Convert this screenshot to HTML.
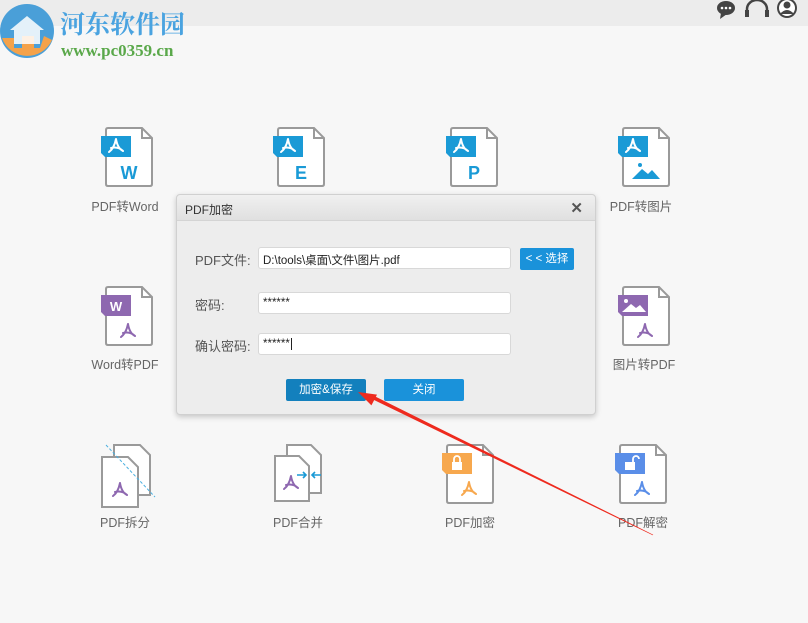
<!DOCTYPE html>
<html><head><meta charset="utf-8"><style>
*{margin:0;padding:0;box-sizing:border-box}
body{width:808px;height:623px;background:#f7f7f7;position:relative;overflow:hidden;font-family:"Liberation Sans","Noto Sans CJK SC",sans-serif}
.top{position:absolute;left:0;top:0;width:808px;height:26px;background:#ececec}
.lbl{position:absolute;font-size:12.5px;color:#666;text-align:center;width:120px}
.dlg{position:absolute;left:176px;top:194px;width:420px;height:221px;background:#ededed;border:1px solid #d0d0d0;border-radius:4px;box-shadow:0 2px 6px rgba(0,0,0,.2)}
.tb{height:26px;background:linear-gradient(#f0f0f0,#e0e0e0);border-bottom:1px solid #d4d4d4;border-radius:4px 4px 0 0;font-size:12px;color:#333;padding:6px 0 0 8px}
.x{position:absolute;right:12px;top:4px;font-size:15px;font-weight:bold;color:#555}
.fl{position:absolute;font-size:13px;color:#555}
.in{position:absolute;left:81px;width:253px;height:22px;background:#fff;border:1px solid #d8d8d8;border-radius:3px;font-size:11.5px;color:#222;padding:4px 0 0 4px}
.btn{position:absolute;height:22px;color:#fff;font-size:11.5px;text-align:center;line-height:22px;border-radius:2px}
</style></head><body>
<div class="top"></div>
<svg width="808" height="623" style="position:absolute;left:0;top:0">
<defs>
<g id="doc"><path d="M2 0H36L46 10V56Q46 58 44 58H2Q0 58 0 56V2Q0 0 2 0Z" fill="#fff" stroke="#9a9a9a" stroke-width="2"/><path d="M36 0V10H46" fill="none" stroke="#9a9a9a" stroke-width="2"/></g>
<path id="acro" d="M0 -7C-1 -2 -3 3 -7 6M0 -7C1 -1 3 3 7 5M-5 2C-1 1 3 1 7 5" fill="none" stroke-width="2" stroke-linecap="round"/>
</defs>
<circle cx="27" cy="31" r="27" fill="#4a9fd8"/>
<path d="M2 38 A27 27 0 0 0 52 40 L44 36 L40 48 L34 48 L34 36 L22 36 L22 48 L14 48 L14 38Z" fill="#f4a24a"/>
<path d="M10 30 L27 16 L44 30 L40 30 L40 44 L14 44 L14 30Z" fill="#fff" opacity=".85"/>
<text x="60" y="33" font-family="Liberation Serif,'Noto Serif CJK SC',serif" font-weight="bold" font-size="25" fill="#4aa3e0">河东软件园</text>
<text x="61" y="56" font-family="Liberation Serif,serif" font-weight="bold" font-size="17" fill="#5aa84a">www.pc0359.cn</text>
<ellipse cx="726" cy="8" rx="9" ry="7" fill="#444"/><path d="M721 13 L720 19 L727 14Z" fill="#444"/>
<circle cx="722" cy="8" r="1.3" fill="#fff"/><circle cx="726" cy="8" r="1.3" fill="#fff"/><circle cx="730" cy="8" r="1.3" fill="#fff"/>
<path d="M747 15 V9 A10 9 0 0 1 767 9 V15" fill="none" stroke="#444" stroke-width="2.5"/>
<rect x="745" y="10" width="4" height="7" fill="#444"/><rect x="765" y="10" width="4" height="7" fill="#444"/>
<circle cx="787" cy="8" r="10" fill="#444"/><circle cx="787" cy="8" r="8" fill="#fff"/><circle cx="787" cy="5" r="3.5" fill="#444"/><path d="M780 14 Q787 6 794 14 Z" fill="#444"/>
<g transform="translate(106,128)"><use href="#doc"/><path d="M-5 8H25V29H-1L-5 25Z" fill="#1a9ad6"/><use href="#acro" transform="translate(10,18)" stroke="#fff"/><text x="23" y="51" text-anchor="middle" font-size="18" font-weight="bold" fill="#1a9ad6">W</text></g>
<g transform="translate(278,128)"><use href="#doc"/><path d="M-5 8H25V29H-1L-5 25Z" fill="#1a9ad6"/><use href="#acro" transform="translate(10,18)" stroke="#fff"/><text x="23" y="51" text-anchor="middle" font-size="18" font-weight="bold" fill="#1a9ad6">E</text></g>
<g transform="translate(451,128)"><use href="#doc"/><path d="M-5 8H25V29H-1L-5 25Z" fill="#1a9ad6"/><use href="#acro" transform="translate(10,18)" stroke="#fff"/><text x="23" y="51" text-anchor="middle" font-size="18" font-weight="bold" fill="#1a9ad6">P</text></g>
<g transform="translate(623,128)"><use href="#doc"/><path d="M-5 8H25V29H-1L-5 25Z" fill="#1a9ad6"/><use href="#acro" transform="translate(10,18)" stroke="#fff"/><circle cx="17" cy="37" r="2" fill="#1a9ad6"/><path d="M9 51L19 41L25 46L29 42L37 51Z" fill="#1a9ad6"/></g>
<g transform="translate(106,287)"><use href="#doc"/><path d="M-5 8H25V29H-1L-5 25Z" fill="#8e68b0"/><text x="10" y="24" text-anchor="middle" font-size="13" font-weight="bold" fill="#fff">W</text><use href="#acro" transform="translate(22,44)" stroke="#8e68b0"/></g>
<g transform="translate(623,287)"><use href="#doc"/><path d="M-5 8H25V29H-1L-5 25Z" fill="#8e68b0"/><circle cx="3" cy="14" r="2" fill="#fff"/><path d="M-1 25L8 17L13 21L17 18L23 25Z" fill="#fff"/><use href="#acro" transform="translate(22,44)" stroke="#8e68b0"/></g>
<g transform="translate(100,445)"><path d="M14 0H40L50 10V50H14Z" fill="#fff" stroke="#9a9a9a" stroke-width="2"/><path d="M2 12H28L38 22V62H2Z" fill="#fff" stroke="#9a9a9a" stroke-width="2"/><line x1="6" y1="0" x2="55" y2="52" stroke="#4ab0e0" stroke-dasharray="3 2"/><use href="#acro" transform="translate(20,45)" stroke="#8e68b0"/></g>
<g transform="translate(273,445)"><path d="M14 0H38L48 10V48H14Z" fill="#fff" stroke="#9a9a9a" stroke-width="2"/><path d="M2 11H26L36 21V56H2Z" fill="#fff" stroke="#9a9a9a" stroke-width="2"/><use href="#acro" transform="translate(18,38)" stroke="#8e68b0"/><path d="M24 30H33M30 27L33 30L30 33M48 30H39M42 27L39 30L42 33" stroke="#1a9ad6" stroke-width="1.6" fill="none"/></g>
<g transform="translate(447,445)"><use href="#doc"/><path d="M-5 8H25V29H-1L-5 25Z" fill="#f7a84e"/><rect x="5" y="17" width="10" height="8" fill="#fff"/><path d="M7 17V14A3 3 0 0 1 13 14V17" stroke="#fff" stroke-width="1.8" fill="none"/><use href="#acro" transform="translate(22,44)" stroke="#f7a84e"/></g>
<g transform="translate(620,445)"><use href="#doc"/><path d="M-5 8H25V29H-1L-5 25Z" fill="#5a8ee8"/><rect x="5" y="17" width="10" height="8" fill="#fff"/><path d="M13 17V14A3 3 0 0 1 19 14" stroke="#fff" stroke-width="1.8" fill="none"/><use href="#acro" transform="translate(22,44)" stroke="#5a8ee8"/></g>
</svg>
<div class="lbl" style="left:65px;top:196px">PDF转Word</div>
<div class="lbl" style="left:581px;top:196px">PDF转图片</div>
<div class="lbl" style="left:65px;top:354px">Word转PDF</div>
<div class="lbl" style="left:584px;top:354px">图片转PDF</div>
<div class="lbl" style="left:65px;top:512px">PDF拆分</div>
<div class="lbl" style="left:238px;top:512px">PDF合并</div>
<div class="lbl" style="left:410px;top:512px">PDF加密</div>
<div class="lbl" style="left:583px;top:512px">PDF解密</div>
<div class="dlg"><div class="tb">PDF加密</div><div class="x">✕</div>
<div class="fl" style="left:18px;top:55px">PDF文件:</div>
<div class="in" style="top:52px">D:\tools\桌面\文件\图片.pdf</div>
<div class="btn" style="left:343px;top:53px;width:54px;background:#1a92da">&lt; &lt; 选择</div>
<div class="fl" style="left:18px;top:100px">密码:</div>
<div class="in" style="top:97px">******</div>
<div class="fl" style="left:18px;top:141px">确认密码:</div>
<div class="in" style="top:138px">******<span style="border-left:1px solid #222;margin-left:1px"></span></div>
<div class="btn" style="left:109px;top:184px;width:80px;background:#1380bd">加密&amp;保存</div>
<div class="btn" style="left:207px;top:184px;width:80px;background:#1a92da">关闭</div>
</div>
<svg width="808" height="623" style="position:absolute;left:0;top:0">
<polygon points="653.2,534.7 373,395.4 371.2,398.6 652.8,535.3" fill="#ee2a1e"/>
<polygon points="358,392 377,394.6 371.4,405.4" fill="#ee2a1e"/>
</svg>
</body></html>
